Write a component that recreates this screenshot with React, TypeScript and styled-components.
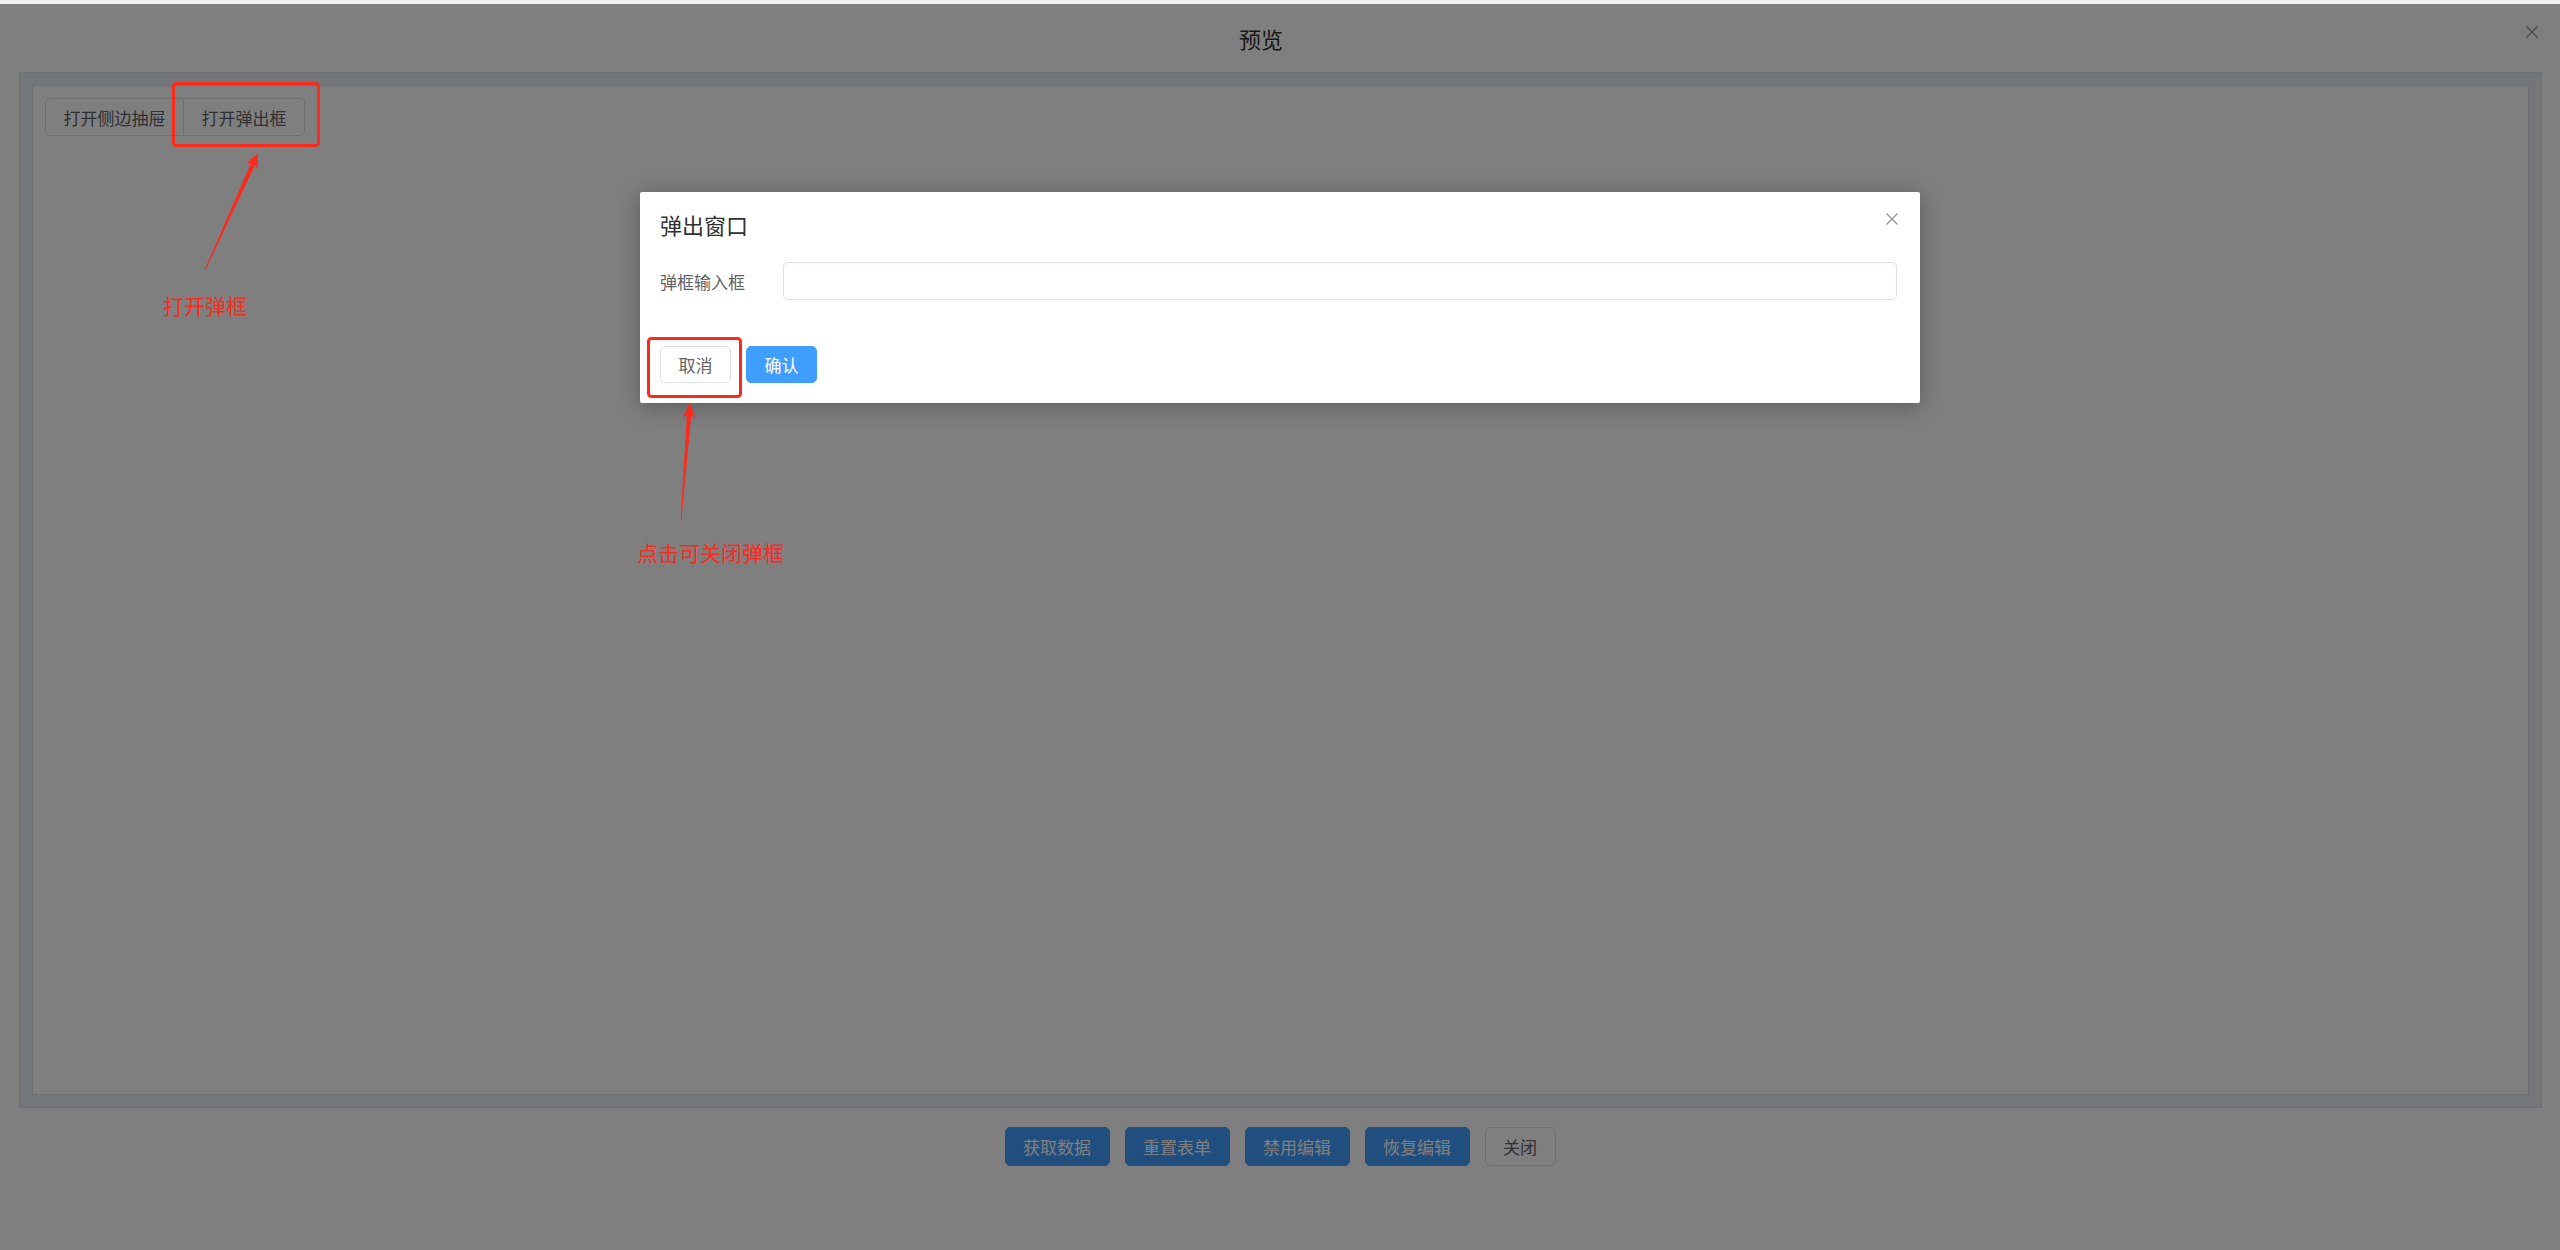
import React from 'react';
import styled, { createGlobalStyle } from 'styled-components';

const GlobalStyle = createGlobalStyle`
  html, body { margin: 0; padding: 0; background: #fff; }
  body { font-family: "Noto Sans CJK SC", "Noto Sans", sans-serif; }
  * { box-sizing: border-box; }
`;

const Page = styled.div`
  position: relative;
  width: 2560px;
  height: 1250px;
  overflow: hidden;
  display: flex;
  flex-direction: column;
  background: #fff;
`;

const TopStrip = styled.div`
  flex: none;
  height: 4px;
  background: #f0f0f0;
`;

const PreviewDialog = styled.section`
  flex: 1;
  display: flex;
  flex-direction: column;
  background: #fff;
`;

const PreviewHeader = styled.header`
  flex: none;
  height: 68px;
  display: flex;
  align-items: center;
  gap: 24px;
  padding: 0 22px 0 20px;
`;

const PreviewTitle = styled.h2`
  flex: 1;
  margin: 0;
  text-align: center;
  font-size: 22px;
  font-weight: 400;
  line-height: 30px;
  color: #303133;
`;

const CloseButton = styled.button<{ $top: number }>`
  flex: none;
  align-self: flex-start;
  margin-top: ${(p) => p.$top}px;
  width: 12px;
  height: 12px;
  padding: 0;
  border: 0;
  background: none;
  color: #909399;
  display: flex;
`;

const PreviewBody = styled.div`
  flex: none;
  height: 1036px;
  margin: 0 18px 0 19px;
  border: 1px solid #dcdfe6;
  background: #ebedf2;
  padding: 12px;
  display: flex;
`;

const Canvas = styled.div`
  flex: 1;
  border: 1px solid #dcdfe6;
  background: #fff;
  padding: 12px;
  display: flex;
  align-items: flex-start;
`;

const ButtonGroup = styled.div`
  display: inline-flex;
`;

const GroupButton = styled.button`
  height: 38px;
  padding: 0 17.5px;
  font-family: inherit;
  font-size: 17px;
  color: #606266;
  background: #fff;
  border: 1px solid #dcdfe6;
  white-space: nowrap;
  &:first-child { border-radius: 5px 0 0 5px; }
  &:last-child { border-radius: 0 5px 5px 0; border-left: 0; }
`;

const PreviewFooter = styled.footer`
  display: flex;
  justify-content: center;
  gap: 15px;
  padding-top: 19px;
`;

const Button = styled.button<{ $primary?: boolean; $h: number }>`
  height: ${(p) => p.$h}px;
  padding: 0 17.5px;
  font-family: inherit;
  font-size: 17px;
  white-space: nowrap;
  border-radius: 5px;
  border: 1px solid ${(p) => (p.$primary ? '#409eff' : '#dcdfe6')};
  background: ${(p) => (p.$primary ? '#409eff' : '#fff')};
  color: ${(p) => (p.$primary ? '#fff' : '#606266')};
`;

const Mask = styled.div`
  position: absolute;
  top: 4px;
  left: 0;
  right: 0;
  bottom: 0;
  background: rgba(0, 0, 0, 0.5);
  display: flex;
  flex-direction: column;
`;

const Modal = styled.div`
  margin: 188px auto 0;
  width: 50%;
  background: #fff;
  border-radius: 2px;
  box-shadow: 0 3px 22px rgba(0, 0, 0, 0.3);
`;

const ModalHeader = styled.div`
  display: flex;
  align-items: flex-start;
  padding: 17px 22px 0 20px;
`;

const ModalTitle = styled.span`
  flex: 1;
  font-size: 22px;
  line-height: 30px;
  color: #303133;
`;

const ModalBody = styled.div`
  padding: 23px 23px 0 20px;
`;

const FormRow = styled.div`
  display: flex;
  align-items: center;
`;

const FormLabel = styled.label`
  flex: none;
  width: 123px;
  font-size: 17px;
  color: #606266;
  white-space: nowrap;
`;

const TextInput = styled.input`
  flex: 1;
  height: 38px;
  border: 1px solid #dcdfe6;
  border-radius: 5px;
  padding: 0 14px;
  font-family: inherit;
  font-size: 17px;
  outline: none;
`;

const ModalFooter = styled.div`
  display: flex;
  gap: 15px;
  padding: 46px 20px 20px;
`;

const Annotations = styled.svg`
  position: absolute;
  left: 0;
  top: 0;
  pointer-events: none;
`;

const Note = styled.span<{ $x: number; $y: number }>`
  position: absolute;
  left: ${(p) => p.$x}px;
  top: ${(p) => p.$y}px;
  font-size: 21px;
  line-height: 24px;
  color: #fb2a1d;
  white-space: nowrap;
`;

const CloseIcon = () => (
  <svg width="12" height="12" viewBox="0 0 12 12">
    <path d="M0.5 0.5 L11.5 11.5 M11.5 0.5 L0.5 11.5" stroke="currentColor" strokeWidth="1.3" fill="none" />
  </svg>
);

function arrowPoints(x1: number, y1: number, x2: number, y2: number) {
  const head = 15;
  const headW = 6.5;
  const notch = 3;
  const shaftW = 2.2;
  const tailW = 0.4;
  const dx = x2 - x1;
  const dy = y2 - y1;
  const len = Math.hypot(dx, dy);
  const ux = dx / len;
  const uy = dy / len;
  const nx = -uy;
  const ny = ux;
  const bx = x2 - ux * head;
  const by = y2 - uy * head;
  const nbx = bx + ux * notch;
  const nby = by + uy * notch;
  const pts = [
    [x1 + nx * tailW, y1 + ny * tailW],
    [nbx + nx * shaftW, nby + ny * shaftW],
    [bx + nx * headW, by + ny * headW],
    [x2, y2],
    [bx - nx * headW, by - ny * headW],
    [nbx - nx * shaftW, nby - ny * shaftW],
    [x1 - nx * tailW, y1 - ny * tailW],
  ];
  return pts.map((p) => p.map((v) => v.toFixed(1)).join(',')).join(' ');
}

export default function App() {
  return (
    <>
      <GlobalStyle />
      <Page>
        <TopStrip />
        <PreviewDialog>
          <PreviewHeader>
            <PreviewTitle>预览</PreviewTitle>
            <CloseButton $top={22} aria-label="关闭">
              <CloseIcon />
            </CloseButton>
          </PreviewHeader>
          <PreviewBody>
            <Canvas>
              <ButtonGroup>
                <GroupButton>打开侧边抽屉</GroupButton>
                <GroupButton>打开弹出框</GroupButton>
              </ButtonGroup>
            </Canvas>
          </PreviewBody>
          <PreviewFooter>
            <Button $primary $h={39}>获取数据</Button>
            <Button $primary $h={39}>重置表单</Button>
            <Button $primary $h={39}>禁用编辑</Button>
            <Button $primary $h={39}>恢复编辑</Button>
            <Button $h={39}>关闭</Button>
          </PreviewFooter>
        </PreviewDialog>

        <Mask>
          <Modal>
            <ModalHeader>
              <ModalTitle>弹出窗口</ModalTitle>
              <CloseButton $top={4} aria-label="关闭">
                <CloseIcon />
              </CloseButton>
            </ModalHeader>
            <ModalBody>
              <FormRow>
                <FormLabel>弹框输入框</FormLabel>
                <TextInput />
              </FormRow>
            </ModalBody>
            <ModalFooter>
              <Button $h={37}>取消</Button>
              <Button $primary $h={37}>确认</Button>
            </ModalFooter>
          </Modal>
        </Mask>

        <Annotations width="2560" height="1250" viewBox="0 0 2560 1250">
          <rect x="173.5" y="83.5" width="145" height="62" rx="3" fill="none" stroke="#fb2a1d" strokeWidth="3" />
          <polygon points={arrowPoints(205, 270, 258, 153)} fill="#fb2a1d" />
          <rect x="648.5" y="338.5" width="92" height="58" rx="3" fill="none" stroke="#fb2a1d" strokeWidth="3" />
          <polygon points={arrowPoints(681, 520, 690, 403)} fill="#fb2a1d" />
        </Annotations>
        <Note $x={163} $y={293}>打开弹框</Note>
        <Note $x={637} $y={540}>点击可关闭弹框</Note>
      </Page>
    </>
  );
}
